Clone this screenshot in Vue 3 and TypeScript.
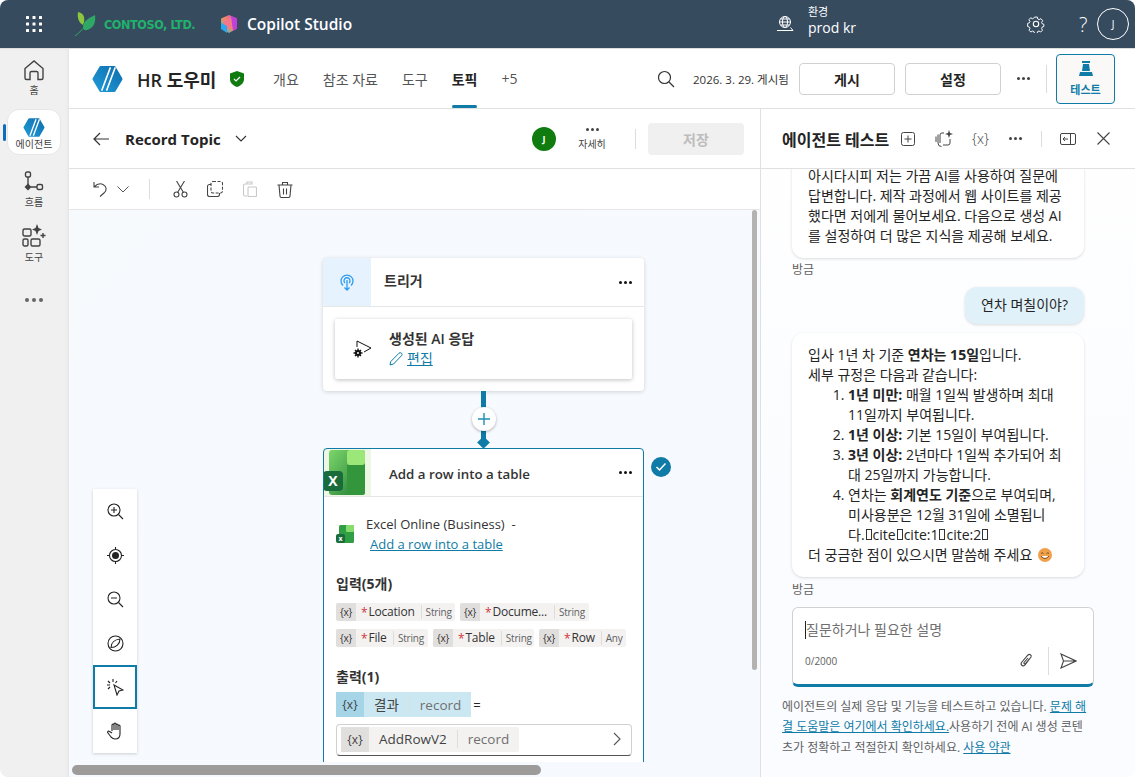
<script setup lang="ts">
interface Chip {
  name: string
  type: string
  width: number
}

const tabs = ['개요', '참조 자료', '도구', '토픽', '+5']

const inputRows: Chip[][] = [
  [
    { name: 'Location', type: 'String', width: 119 },
    { name: 'Docume...', type: 'String', width: 129 }
  ],
  [
    { name: 'File', type: 'String', width: 92 },
    { name: 'Table', type: 'String', width: 101 },
    { name: 'Row', type: 'Any', width: 87 }
  ]
]
</script>

<template>
  <div class="app">
    <header class="topbar">
      <svg class="waffle" width="16" height="16" viewBox="0 0 16 16" fill="#fff">
        <rect v-for="n in 9" :key="n" :x="(n - 1) % 3 * 6.5" :y="Math.floor((n - 1) / 3) * 6.5" width="3" height="3" rx=".5" />
      </svg>
      <svg class="leaf" width="22" height="26" viewBox="0 0 22 26">
        <path d="M3 1c5 1 7 4 6 10l-1 3C4 12 2 7 3 1z" fill="#8cc63f" />
        <path d="M20 4c1 7-1 13-8 15-3 1-4-1-4-3 0-6 6-9 12-12z" fill="#2fa866" />
        <path d="M0 25C5 21 9 17 14 11" stroke="#2fa866" stroke-width="1" fill="none" />
      </svg>
      <span class="contoso">CONTOSO, LTD.</span>
      <svg class="copilot" width="18" height="18" viewBox="0 0 18 18">
        <defs>
          <linearGradient id="cp" x1="0" y1="1" x2="1" y2="0">
            <stop offset="0" stop-color="#20c4e8" />
            <stop offset=".5" stop-color="#f58a5a" />
            <stop offset="1" stop-color="#c84fe0" />
          </linearGradient>
        </defs>
        <path d="M9 0l8 3.500v10L9 18l-8-4.500v-10z" fill="url(#cp)" />
        <path d="M11 1l6 2.500v10l-4 2.500z" fill="#c03fd8" />
        <path d="M4 5l7-2 1 9-5 3-3-2z" fill="#f4788a" />
        <path d="M1 8l6 3v7l-6-4z" fill="#2aa8f0" />
      </svg>
      <span class="product">Copilot Studio</span>
      <svg class="globe" width="18" height="16" viewBox="0 0 18 16" fill="none" stroke="#fff" stroke-width="1">
        <circle cx="9" cy="6" r="5.500" />
        <ellipse cx="9" cy="6" rx="2.500" ry="5.500" />
        <path d="M3.500 6h11M4.500 3h9M4.500 9h9M1 14.500h16l-2.500-3" />
      </svg>
      <div class="env">
        <span class="env-label">환경</span>
        <span class="env-name">prod kr</span>
      </div>
      <svg class="gear" width="18" height="18" viewBox="0 0 18 18" fill="none" stroke="#fff" stroke-width="1.100">
        <circle cx="9" cy="9" r="2.700" />
        <path d="M7.500 1.200h3l.5 2.200 1.500.7 2-1.100 2 2.200-1.200 1.900.5 1.500 2 .7v2.500l-2 .7-.5 1.500 1 2-2 2-2-1.100-1.500.6-.6 2.200h-2.900l-.6-2.200-1.500-.6-2 1.100-2-2 1-2-.6-1.500-2-.7V8.300l2-.7.6-1.500-1.200-1.900 2-2.200 2 1.100 1.500-.7z" transform="translate(1 1) scale(.89)" />
      </svg>
      <span class="help">?</span>
      <span class="me">J</span>
    </header>

    <div class="main">
      <nav class="rail">
        <div class="rail-item home">
          <svg width="22" height="22" viewBox="0 0 22 22" fill="none" stroke="#424242" stroke-width="1.400">
            <path d="M2 9.500L11 2l9 7.500V19a1.500 1.500 0 0 1-1.500 1.500H15V14a1.500 1.500 0 0 0-1.500-1.500h-5A1.500 1.500 0 0 0 7 14v6.500H3.500A1.500 1.500 0 0 1 2 19z" />
          </svg>
          <span>홈</span>
        </div>
        <div class="rail-active">
          <i class="rail-mark"></i>
          <svg width="22" height="19" viewBox="0 0 32 28">
            <defs>
              <linearGradient id="hexa" x1="0" y1="1" x2="1" y2="0">
                <stop offset="0" stop-color="#1e9ad6" />
                <stop offset="1" stop-color="#0f6fb0" />
              </linearGradient>
            </defs>
            <path d="M9 2h14l7 12-7 12H9L2 14z" fill="url(#hexa)" stroke="url(#hexa)" stroke-width="3" stroke-linejoin="round" />
            <path d="M19 2L10 26M24 2l-9 24" stroke="#fff" stroke-width="2" />
          </svg>
          <span>에이전트</span>
        </div>
        <div class="rail-item flow">
          <svg width="20" height="24" viewBox="0 0 20 24" fill="none" stroke="#424242" stroke-width="1.400">
            <rect x="1.500" y="1" width="5" height="5" rx="1.500" />
            <path d="M4 6v12" />
            <path d="M4 12.500L7.500 16 4 19.500.500 16z" fill="#424242" stroke="none" />
            <path d="M7 16h6" />
            <rect x="13" y="13.500" width="5.500" height="5" rx="1.500" />
          </svg>
          <span>흐름</span>
        </div>
        <div class="rail-item tools">
          <svg width="24" height="24" viewBox="0 0 24 24" fill="none" stroke="#424242" stroke-width="1.400">
            <rect x="1" y="5" width="8" height="7" rx="1.500" />
            <rect x="1" y="15" width="5" height="7" rx="1.500" />
            <rect x="9" y="15" width="9" height="7" rx="1.500" />
            <path d="M15 0l1.500 4L20 5.500 16.500 7 15 11l-1.500-4L10 5.500 13.500 4z" fill="#424242" stroke="none" />
            <path d="M21 9v5M18.500 11.500h5" />
          </svg>
          <span>도구</span>
        </div>
        <div class="rail-more"><i></i><i></i><i></i></div>
      </nav>

      <div class="content">
        <div class="agent-bar">
          <svg class="agent-logo" width="31" height="28" viewBox="0 0 32 28">
            <path d="M9 2h14l7 12-7 12H9L2 14z" fill="url(#hexa)" stroke="url(#hexa)" stroke-width="3" stroke-linejoin="round" />
            <path d="M19 2L10 26M24 2l-9 24" stroke="#fff" stroke-width="1.600" />
          </svg>
          <span class="agent-name">HR 도우미</span>
          <svg class="shield" width="14" height="16" viewBox="0 0 14 16">
            <path d="M7 0l7 2.500V8c0 4-3 6.500-7 8-4-1.500-7-4-7-8V2.500z" fill="#107c10" />
            <path d="M4 8l2 2 4-4" fill="none" stroke="#fff" stroke-width="1.200" />
          </svg>
          <div class="tabs">
            <span v-for="tab in tabs" :key="tab" class="tab" :class="{ on: tab === '토픽' }">{{ tab }}</span>
          </div>
          <svg class="search" width="18" height="18" viewBox="0 0 18 18" fill="none" stroke="#333" stroke-width="1.200">
            <circle cx="7.500" cy="7.500" r="6" />
            <path d="M12 12l5 5" />
          </svg>
          <span class="published">2026. 3. 29. 게시됨</span>
          <button class="btn">게시</button>
          <button class="btn second">설정</button>
          <span class="dots agent-dots"><i></i><i></i><i></i></span>
          <i class="vline"></i>
          <button class="test-btn">
            <svg width="14" height="16" viewBox="0 0 14 16" fill="#0f7ba6">
              <path d="M3 0h8v2H3zM4 3h6l1 7H3zM1 11h12l1 4H0z" />
            </svg>
            <span>테스트</span>
          </button>
        </div>

        <div class="work">
          <section class="editor">
            <div class="topic-bar">
              <svg width="16" height="14" viewBox="0 0 16 14" fill="none" stroke="#333" stroke-width="1.200">
                <path d="M16 7H1M7 1L1 7l6 6" />
              </svg>
              <span class="topic-name">Record Topic</span>
              <svg width="12" height="8" viewBox="0 0 12 8" fill="none" stroke="#333" stroke-width="1.100">
                <path d="M1 1l5 5 5-5" />
              </svg>
              <span class="owner">J</span>
              <div class="more">
                <span class="dots"><i></i><i></i><i></i></span>
                <span>자세히</span>
              </div>
              <i class="vline short"></i>
              <button class="save">저장</button>
            </div>

            <div class="toolbar">
              <svg class="t-undo" width="15" height="16" viewBox="0 0 15 16" fill="none" stroke="#444" stroke-width="1.100">
                <path d="M1 1v5h5M1 6c3-3 6-4 9-2.500 4 2 4 6 1 8.500l-4 3.500" />
              </svg>
              <svg class="t-chev" width="12" height="7" viewBox="0 0 12 7" fill="none" stroke="#555">
                <path d="M.500.500L6 6l5.500-5.500" />
              </svg>
              <i class="vline tool-line"></i>
              <svg class="t-cut" width="15" height="17" viewBox="0 0 15 17" fill="none" stroke="#444" stroke-width="1.100">
                <circle cx="3.500" cy="13.500" r="2.500" />
                <circle cx="11.500" cy="13.500" r="2.500" />
                <path d="M4.500 11.500L11.500 0M10.500 11.500L3.500 0" />
              </svg>
              <svg class="t-copy" width="16" height="16" viewBox="0 0 16 16" fill="none" stroke="#444" stroke-width="1.100">
                <rect x="4" y=".5" width="11.500" height="11.500" rx="2" stroke-dasharray="3 1.500" />
                <path d="M4 3.500H2.500a2 2 0 0 0-2 2v8a2 2 0 0 0 2 2h8a2 2 0 0 0 2-2V12" />
              </svg>
              <svg class="t-paste" width="14" height="16" viewBox="0 0 14 16" fill="none" stroke="#c8c8c8" stroke-width="1.100">
                <path d="M4 3H2a1.500 1.500 0 0 0-1.500 1.500v9A1.500 1.500 0 0 0 2 15h2M4 1h5v2H4z" />
                <rect x="5" y="6" width="8.500" height="9.500" rx="1" />
              </svg>
              <svg class="t-trash" width="16" height="17" viewBox="0 0 16 17" fill="none" stroke="#444" stroke-width="1.100">
                <path d="M.500 4h15M5.500 4V1.500h5V4M2 4l1 11a1.500 1.500 0 0 0 1.500 1.500h7A1.500 1.500 0 0 0 13 15l1-11M6.500 7.500v6M9.500 7.500v6" />
              </svg>
            </div>

            <div class="canvas">
              <div class="flow-col">
                <article class="node">
                  <div class="node-head">
                    <div class="node-icon trigger">
                      <svg width="14" height="17" viewBox="0 0 14 17" fill="none" stroke="#2f9bf0" stroke-width="1.300">
                        <path d="M3 11.500a6 6 0 1 1 8 0" />
                        <path d="M5 9a3 3 0 1 1 4 0" />
                        <path d="M7 6v10M4.500 13.500L7 16l2.500-2.500" />
                      </svg>
                    </div>
                    <span class="node-title">트리거</span>
                    <span class="dots black"><i></i><i></i><i></i></span>
                  </div>
                  <div class="trigger-body">
                    <div class="ai-card">
                      <svg class="ai-icon" width="20" height="20" viewBox="0 0 20 20">
                        <path d="M4 8V2l14 7-7 4" fill="none" stroke="#111" stroke-width="1" />
                        <circle cx="5" cy="14" r="3" fill="#111" />
                        <path d="M5 9.500v9M.5 14h9M2 11l6 6M8 11l-6 6" stroke="#111" stroke-width="1.400" />
                        <circle cx="5" cy="14" r="1" fill="#fff" />
                      </svg>
                      <div class="ai-text">
                        <span class="ai-title">생성된 AI 응답</span>
                        <span class="ai-edit">
                          <svg width="14" height="14" viewBox="0 0 14 14" fill="none" stroke="#0f7ba6">
                            <path d="M1 13l.8-3.500L10 1.200a1.500 1.500 0 0 1 2.500 2.500L4.500 12z" />
                          </svg>
                          <a>편집</a>
                        </span>
                      </div>
                    </div>
                  </div>
                </article>

                <div class="link">
                  <span class="plus">
                    <svg width="14" height="14" viewBox="0 0 14 14" stroke="#1d8fb5" stroke-width="1.400">
                      <path d="M7 1v12M1 7h12" />
                    </svg>
                  </span>
                  <i class="diamond"></i>
                </div>

                <article class="node action">
                  <div class="node-head">
                    <div class="node-icon excel">
                      <svg width="46" height="48" viewBox="0 0 46 48">
                        <defs>
                          <linearGradient id="xl" x1="0" y1="0" x2="1" y2="1">
                            <stop offset="0" stop-color="#7cd66a" />
                            <stop offset="1" stop-color="#1e7a34" />
                          </linearGradient>
                        </defs>
                        <rect x="6" y="2" width="36" height="45" rx="3" fill="url(#xl)" />
                        <rect x="24" y="2" width="18" height="15" rx="3" fill="#9be878" />
                        <path d="M24 17h18v27a3 3 0 0 1-3 3H24z" fill="#33953c" />
                        <rect x="0" y="23" width="20" height="20" rx="4" fill="#1a6b3b" />
                        <text x="10" y="38" class="xl-x">X</text>
                      </svg>
                    </div>
                    <span class="node-title plain">Add a row into a table</span>
                    <span class="dots black"><i></i><i></i><i></i></span>
                  </div>
                  <i class="done">
                    <svg width="12" height="10" viewBox="0 0 12 10" fill="none" stroke="#fff" stroke-width="1.500">
                      <path d="M1.500 5l3 3 6-6.500" />
                    </svg>
                  </i>
                  <div class="action-body">
                    <div class="connector">
                      <svg width="19" height="20" viewBox="0 0 19 20">
                        <rect x="3" y="1" width="15" height="18" rx="1.500" fill="#2f9e44" />
                        <rect x="10" y="1" width="8" height="7" rx="1" fill="#86dc6c" />
                        <rect x="0" y="10" width="9" height="9" rx="2" fill="#1a6b3b" />
                        <text x="4.500" y="17" class="xl-small">x</text>
                      </svg>
                      <div class="connector-text">
                        <span>Excel Online (Business) &nbsp;-</span>
                        <a>Add a row into a table</a>
                      </div>
                    </div>

                    <h4>입력(5개)</h4>
                    <div v-for="(row, i) in inputRows" :key="i" class="chip-row">
                      <span v-for="chip in row" :key="chip.name" class="chip" :style="{ width: chip.width + 'px' }">
                        <span class="chip-x">{x}</span>
                        <b>*</b>
                        <span class="chip-name">{{ chip.name }}</span>
                        <span class="chip-type">{{ chip.type }}</span>
                      </span>
                    </div>

                    <h4 class="out-title">출력(1)</h4>
                    <div class="out-row">
                      <span class="var blue">
                        <span class="var-x">{x}</span>
                        <span class="var-name">결과</span>
                        <span class="var-type">record</span>
                      </span>
                      <span class="eq">=</span>
                    </div>
                    <div class="value-box">
                      <span class="var">
                        <span class="var-x">{x}</span>
                        <span class="var-name">AddRowV2</span>
                        <span class="var-type">record</span>
                      </span>
                      <svg width="8" height="14" viewBox="0 0 8 14" fill="none" stroke="#555" stroke-width="1.100">
                        <path d="M1 1l6 6-6 6" />
                      </svg>
                    </div>
                  </div>
                </article>
              </div>

              <div class="zoom-bar">
                <span class="zoom-btn">
                  <svg width="17" height="17" viewBox="0 0 17 17" fill="none" stroke="#222" stroke-width="1.100">
                    <circle cx="7" cy="7" r="6" />
                    <path d="M11.500 11.500L16 16M4 7h6M7 4v6" />
                  </svg>
                </span>
                <span class="zoom-btn">
                  <svg width="17" height="17" viewBox="0 0 17 17" fill="none" stroke="#222" stroke-width="1.100">
                    <circle cx="8.500" cy="8.500" r="6" />
                    <circle cx="8.500" cy="8.500" r="3.500" fill="#222" stroke="none" />
                    <path d="M8.500 0v2.500M8.500 14.500V17M0 8.500h2.500M14.500 8.500H17" />
                  </svg>
                </span>
                <span class="zoom-btn">
                  <svg width="17" height="17" viewBox="0 0 17 17" fill="none" stroke="#222" stroke-width="1.100">
                    <circle cx="7" cy="7" r="6" />
                    <path d="M11.500 11.500L16 16M4 7h6" />
                  </svg>
                </span>
                <span class="zoom-btn">
                  <svg width="17" height="17" viewBox="0 0 17 17" fill="none" stroke="#222" stroke-width="1.100">
                    <circle cx="8.500" cy="8.500" r="7.500" />
                    <path d="M4 12.500c0-5 4-8 9-8.500 0 5-4 8.500-9 8.500z" />
                  </svg>
                </span>
                <span class="zoom-btn picked">
                  <svg width="17" height="17" viewBox="0 0 17 17" fill="none" stroke="#222" stroke-width="1.100">
                    <path d="M7 6l9 5-4 1-2 4z" />
                    <path d="M6 0v3M1 2l2 2M0 6h3M1 10l2-2M10 2L8.500 4" />
                  </svg>
                </span>
                <span class="zoom-btn">
                  <svg width="17" height="18" viewBox="0 0 17 18" fill="none" stroke="#222" stroke-width="1.100">
                    <path d="M5 9V3a1 1 0 0 1 2 0V2a1 1 0 0 1 2 0v1a1 1 0 0 1 2 0v1a1 1 0 0 1 2 0v8c0 3-2 5-5 5-2 0-3-1-4-2L1 11c-1-1 0-2.500 1.500-1.500L5 11M7 3v5M9 3v5M11 4v4" />
                  </svg>
                </span>
              </div>

              <i class="vbar"></i>
              <div class="htrack"><i class="hbar"></i></div>
            </div>
          </section>

          <aside class="panel">
            <div class="panel-head">
              <span class="panel-title">에이전트 테스트</span>
              <svg class="p-new" width="14" height="14" viewBox="0 0 14 14" fill="none" stroke="#444">
                <rect x=".5" y=".5" width="13" height="13" rx="2" />
                <path d="M7 3.500v7M3.500 7h7" />
              </svg>
              <svg class="p-spark" width="18" height="17" viewBox="0 0 18 17" fill="none" stroke="#444">
                <path d="M9 3H7a2 2 0 0 0-2 2v8M3 4.500v8.500a3.500 3.500 0 0 0 3.500 3.500M1 6.500V12M8 15h5a2 2 0 0 0 2-2V9" />
                <path d="M14 0l1 3 3 1-3 1-1 3-1-3-3-1 3-1z" fill="#444" stroke="none" />
              </svg>
              <span class="p-x">{x}</span>
              <span class="dots p-dots"><i></i><i></i><i></i></span>
              <i class="vline p-line"></i>
              <svg class="p-side" width="16" height="12" viewBox="0 0 16 12" fill="none" stroke="#444">
                <rect x=".5" y=".5" width="15" height="11" rx="1.500" />
                <path d="M10.500.5v11M8 6H3M5 4L3 6l2 2" />
              </svg>
              <svg class="p-close" width="13" height="13" viewBox="0 0 13 13" stroke="#444" stroke-width="1.100">
                <path d="M.5.5l12 12M12.500.5l-12 12" />
              </svg>
            </div>

            <div class="chat">
              <div class="bubble">
                아시다시피 저는 가끔 AI를 사용하여 질문에 답변합니다. 제작 과정에서 웹 사이트를 제공했다면 저에게 물어보세요. 다음으로 생성 AI를 설정하여 더 많은 지식을 제공해 보세요.
              </div>
              <span class="stamp">방금</span>
              <div class="bubble user">연차 며칠이야?</div>
              <div class="bubble answer">
                입사 1년 차 기준 <strong>연차는 15일</strong>입니다.<br />
                세부 규정은 다음과 같습니다:
                <ol>
                  <li><strong>1년 미만:</strong> 매월 1일씩 발생하며 최대<br />11일까지 부여됩니다.</li>
                  <li><strong>1년 이상:</strong> 기본 15일이 부여됩니다.</li>
                  <li><strong>3년 이상:</strong> 2년마다 1일씩 추가되어 최<br />대 25일까지 가능합니다.</li>
                  <li>연차는 <strong>회계연도 기준</strong>으로 부여되며,<br />미사용분은 12월 31일에 소멸됩니<br />다.<i class="tofu"></i>cite<i class="tofu"></i>cite:1<i class="tofu"></i>cite:2<i class="tofu"></i></li>
                </ol>
                더 궁금한 점이 있으시면 말씀해 주세요
                <svg class="smile" width="14" height="14" viewBox="0 0 14 14">
                  <circle cx="7" cy="7" r="7" fill="#f0a04b" />
                  <path d="M3 5.500q1-1.500 2.500 0M8.500 5.500q1.500-1.500 2.500 0" stroke="#7a4a1e" fill="none" />
                  <path d="M3 8q4 5 8 0" stroke="#7a4a1e" fill="#fff" />
                </svg>
              </div>
              <span class="stamp last">방금</span>
            </div>

            <div class="composer">
              <div class="prompt"><i class="caret"></i>질문하거나 필요한 설명</div>
              <div class="composer-foot">
                <span class="count">0/2000</span>
                <svg class="clip" width="14" height="15" viewBox="0 0 14 15" fill="none" stroke="#444" stroke-width="1.100">
                  <path d="M12 4L6 12c-1.500 2-5 0-3.500-2.500L9 2c1.500-1.500 4 0 3 2L6.500 10.500c-.8 1-2 0-1.500-1L9 5" />
                </svg>
                <i class="vline c-line"></i>
                <svg width="17" height="16" viewBox="0 0 17 16" fill="none" stroke="#444" stroke-width="1.100">
                  <path d="M1 1l15 7-15 7 2.500-7zM3.500 8H16" />
                </svg>
              </div>
            </div>
            <p class="legal">
              에이전트의 실제 응답 및 기능을 테스트하고 있습니다. <a>문제 해<br />결 도움말은 여기에서 확인하세요.</a>사용하기 전에 AI 생성 콘텐<br />츠가 정확하고 적절한지 확인하세요. <a>사용 약관</a>
            </p>
          </aside>
        </div>
      </div>
    </div>
  </div>
</template>

<style>
html,
body {
  margin: 0;
  background: #fff;
}
</style>

<style scoped>
.app {
  width: 1135px;
  height: 777px;
  display: flex;
  flex-direction: column;
  overflow: hidden;
  border-radius: 8px;
  font-family: "Open Sans", "Noto Sans CJK KR", sans-serif;
  font-size: 14px;
  color: #242424;
}

i {
  font-style: normal;
  display: block;
}

/* top bar */
.topbar {
  height: 49px;
  flex: none;
  background: #374b5f;
  color: #fff;
  display: flex;
  align-items: center;
  border-bottom: 1px solid #dedede;
  box-sizing: border-box;
}
.waffle {
  margin-left: 26px;
}
.leaf {
  margin-left: 33px;
}
.contoso {
  margin-left: 7px;
  font-family: "DejaVu Sans", sans-serif;
  font-stretch: condensed;
  font-weight: 700;
  font-size: 12.500px;
  letter-spacing: -.4px;
  color: #1fb26c;
  width: 116px;
  white-space: nowrap;
}
.product {
  margin-left: 9px;
  font-size: 15.500px;
  font-weight: 600;
  width: 529px;
  white-space: nowrap;
}
.env {
  margin-left: 14px;
  display: flex;
  flex-direction: column;
  width: 219px;
  line-height: 16px;
  padding-bottom: 8px;
}
.env-label {
  font-size: 11px;
}
.env-name {
  font-size: 14px;
}
.help {
  margin-left: 34px;
  font-size: 20px;
  font-weight: 300;
  width: 13px;
}
.me {
  margin-left: 5px;
  width: 32px;
  height: 32px;
  box-sizing: border-box;
  border: 1px solid #fff;
  border-radius: 50%;
  display: flex;
  align-items: center;
  justify-content: center;
  font-size: 10px;
}

.main {
  flex: 1;
  min-height: 0;
  display: flex;
}

/* left rail */
.rail {
  width: 69px;
  flex: none;
  background: #f0f0f0;
  box-shadow: inset -3px 0 3px -2px #e2e2e2;
  display: flex;
  flex-direction: column;
  align-items: center;
  padding: 10px 1px 0 0;
  box-sizing: border-box;
}
.rail-item,
.rail-active {
  display: flex;
  flex-direction: column;
  align-items: center;
  font-size: 10px;
  color: #424242;
  line-height: 14px;
}
.rail-item span {
  margin-top: 2px;
}
.rail-active {
  position: relative;
  width: 54px;
  height: 46px;
  box-sizing: border-box;
  margin-top: 12px;
  padding-top: 8px;
  background: #fff;
  border: 1px solid #e6e6e6;
  border-radius: 12px;
}
.rail-mark {
  position: absolute;
  left: -5px;
  top: 14px;
  width: 3px;
  height: 17px;
  border-radius: 2px;
  background: #0f6cbd;
}
.flow {
  margin-top: 16px;
}
.flow span {
  margin-top: 0;
}
.tools {
  margin-top: 15px;
}
.rail-more {
  margin-top: 34px;
  display: flex;
  gap: 3px;
}
.rail-more i {
  width: 4px;
  height: 4px;
  border-radius: 50%;
  background: #666;
}

.content {
  flex: 1;
  min-width: 0;
  display: flex;
  flex-direction: column;
}

/* agent header */
.agent-bar {
  height: 60px;
  flex: none;
  display: flex;
  align-items: center;
  border-bottom: 1px solid #e0e0e0;
  box-sizing: border-box;
  position: relative;
}
.agent-logo {
  margin-left: 23px;
}
.agent-name {
  margin-left: 14px;
  font-size: 18px;
  font-weight: 600;
  width: 93px;
  white-space: nowrap;
}
.tabs {
  margin-left: 29px;
  display: flex;
  gap: 24px;
  height: 100%;
  width: 384px;
}
.tab {
  display: flex;
  align-items: center;
  color: #555;
  font-size: 14px;
  position: relative;
}
.tab.on {
  color: #242424;
  font-weight: 700;
}
.tab.on::after {
  content: "";
  position: absolute;
  left: 0;
  right: 0;
  bottom: 0;
  height: 3px;
  border-radius: 2px;
  background: #0f7ba6;
}
.published {
  margin-left: 18px;
  font-size: 11.500px;
  width: 106px;
  white-space: nowrap;
  color: #333;
}
.btn {
  width: 96px;
  height: 32px;
  background: #fff;
  border: 1px solid #d1d1d1;
  border-radius: 4px;
  font: inherit;
  font-weight: 700;
  color: #242424;
  padding: 0;
}
.second {
  margin-left: 10px;
}
.dots {
  display: inline-flex;
  gap: 2px;
}
.dots i {
  width: 3px;
  height: 3px;
  border-radius: 50%;
  background: #424242;
}
.dots.black i {
  background: #111;
}
.agent-dots {
  margin-left: 16px;
}
.vline {
  width: 1px;
  background: #dcdcdc;
  height: 28px;
}
.agent-bar .vline {
  margin-left: 16px;
}
.test-btn {
  margin-left: 9px;
  width: 59px;
  height: 50px;
  background: #faf9f8;
  border: 1px solid #0f7ba6;
  border-radius: 4px;
  display: flex;
  flex-direction: column;
  align-items: center;
  justify-content: center;
  gap: 4px;
  padding: 0;
  font-family: inherit;
  font-size: 11px;
  font-weight: 700;
  color: #0f7ba6;
}

.work {
  flex: 1;
  min-height: 0;
  display: flex;
}

/* editor */
.editor {
  width: 692px;
  flex: none;
  border-right: 1px solid #e0e0e0;
  box-sizing: border-box;
  display: flex;
  flex-direction: column;
  min-height: 0;
}
.topic-bar {
  height: 60px;
  flex: none;
  display: flex;
  align-items: center;
  padding-left: 24px;
  border-bottom: 1px solid #e0e0e0;
  box-sizing: border-box;
}
.topic-name {
  margin-left: 16px;
  font-size: 15px;
  font-weight: 700;
  width: 110px;
  white-space: nowrap;
}
.owner {
  margin-left: 285px;
  width: 24px;
  height: 24px;
  border-radius: 50%;
  background: #107c10;
  color: #fff;
  display: flex;
  align-items: center;
  justify-content: center;
  font-size: 9px;
  font-weight: 700;
}
.more {
  margin-left: 21px;
  width: 30px;
  display: flex;
  flex-direction: column;
  align-items: center;
  gap: 7px;
  font-size: 10px;
  color: #424242;
  line-height: 12px;
}
.vline.short {
  height: 20px;
  margin-left: 28px;
}
.save {
  margin-left: 12px;
  width: 96px;
  height: 32px;
  border: none;
  border-radius: 4px;
  background: #f0f0f0;
  color: #bdbdbd;
  font-family: inherit;
  font-size: 14px;
  font-weight: 700;
  padding: 0;
}

.toolbar {
  height: 41px;
  flex: none;
  display: flex;
  align-items: center;
  padding-left: 24px;
  border-bottom: 1px solid #e6e6e6;
  box-sizing: border-box;
}
.t-chev {
  margin-left: 9px;
}
.tool-line {
  margin-left: 20px;
  height: 20px;
}
.t-cut {
  margin-left: 23px;
}
.t-copy {
  margin-left: 19px;
}
.t-paste {
  margin-left: 20px;
}
.t-trash {
  margin-left: 20px;
}

/* canvas */
.canvas {
  flex: 1;
  min-height: 0;
  position: relative;
  overflow: hidden;
  background: linear-gradient(135deg, #f7fafd, #f6f9fe);
}
.flow-col {
  width: 321px;
  margin-left: 254px;
  padding-top: 48px;
}
.node {
  background: #fff;
  border-radius: 4px;
  box-shadow: 0 1px 4px rgba(0, 0, 0, .16);
  position: relative;
}
.node-head {
  height: 48px;
  display: flex;
  align-items: center;
  border-bottom: 1px solid #e6e6e6;
  padding-right: 12px;
}
.node-icon {
  width: 48px;
  height: 48px;
  flex: none;
  display: flex;
  align-items: center;
  justify-content: center;
}
.trigger {
  background: #e6f2fd;
}
.node-title {
  margin: 0 0 4px 13px;
  flex: 1;
  font-weight: 700;
  color: #333;
  font-size: 14px;
}
.node-title.plain {
  margin: 4px 0 0 18px;
  font-size: 13.300px;
  font-weight: 600;
}
.trigger-body {
  padding: 12px;
}
.ai-card {
  height: 60px;
  display: flex;
  align-items: center;
  padding-left: 18px;
  box-shadow: 0 1px 4px rgba(0, 0, 0, .25);
  border-radius: 2px;
}
.ai-text {
  margin-left: 16px;
  display: flex;
  flex-direction: column;
  line-height: 20px;
}
.ai-title {
  font-weight: 600;
  font-size: 14px;
  color: #333;
}
.ai-edit {
  display: flex;
  align-items: center;
  gap: 4px;
  font-size: 14px;
}
a {
  color: #0f7ba6;
  text-decoration: underline;
}
.link {
  height: 57px;
  position: relative;
}
.link::before {
  content: "";
  position: absolute;
  left: 158px;
  top: 0;
  width: 5px;
  height: 52px;
  background: #0f7ba6;
}
.plus {
  position: absolute;
  left: 149px;
  top: 16px;
  width: 24px;
  height: 24px;
  border-radius: 50%;
  background: #fff;
  box-shadow: 0 1px 3px rgba(0, 0, 0, .3);
  display: flex;
  align-items: center;
  justify-content: center;
}
.diamond {
  position: absolute;
  left: 156px;
  top: 47px;
  width: 9px;
  height: 9px;
  background: #0f7ba6;
  transform: rotate(45deg);
}
.action {
  box-shadow: none;
  outline: 1px solid #0f7ba6;
  outline-offset: -1px;
  height: 400px;
}
.excel {
  background: #eef7e6;
  justify-content: flex-start;
}
.done {
  position: absolute;
  left: 328px;
  top: 9px;
  width: 20px;
  height: 20px;
  border-radius: 50%;
  background: #0f7ba6;
  display: flex;
  align-items: center;
  justify-content: center;
}
.xl-x {
  fill: #fff;
  font-size: 14px;
  font-weight: 700;
  text-anchor: middle;
}
.xl-small {
  fill: #fff;
  font-size: 7px;
  font-weight: 700;
  text-anchor: middle;
}
.action-body {
  padding: 17px 12px 0 13px;
}
.connector {
  display: flex;
  align-items: center;
  gap: 11px;
}
.connector-text {
  display: flex;
  flex-direction: column;
  font-size: 13px;
  color: #333;
  line-height: 20px;
}
.connector-text a {
  margin-left: 4px;
}
h4 {
  margin: 20px 0 9px;
  font-size: 14px;
  font-weight: 700;
  color: #333;
  line-height: 20px;
}
.chip-row {
  display: flex;
  gap: 5px;
  margin-bottom: 8px;
}
.chip {
  height: 18px;
  box-sizing: border-box;
  display: flex;
  align-items: center;
  background: #f3f2f1;
  border-radius: 2px;
  font-size: 12px;
  color: #333;
  white-space: nowrap;
  overflow: hidden;
  letter-spacing: -.2px;
}
.chip-x {
  width: 20px;
  height: 100%;
  flex: none;
  background: #e1dfdd;
  display: flex;
  align-items: center;
  justify-content: center;
  font-size: 10px;
}
.chip b {
  margin-left: 5px;
  color: #d13438;
  font-weight: 400;
}
.chip-name {
  margin-left: 1px;
  padding-right: 6px;
  border-right: 1px solid #dcdcdc;
  flex: 1;
  line-height: 14px;
}
.chip-type {
  padding: 0 4px;
  font-size: 10px;
  color: #616161;
}
.out-title {
  margin: 20px 0 5px;
}
.out-row {
  display: flex;
  align-items: center;
}
.var {
  height: 25px;
  display: inline-flex;
  align-items: center;
  background: #f3f2f1;
  border-radius: 2px;
  font-size: 13.500px;
  color: #424242;
}
.var.blue {
  background: #cbe7f2;
  border-radius: 0;
}
.var-x {
  width: 28px;
  height: 100%;
  background: #e1dfdd;
  display: flex;
  align-items: center;
  justify-content: center;
  font-size: 12px;
}
.blue .var-x {
  background: #a6d5e8;
}
.var-name {
  padding: 0 10px;
  border-right: 1px solid #dedede;
  line-height: 18px;
}
.var-type {
  padding: 0 10px;
  color: #707070;
}
.eq {
  margin-left: 2px;
  font-size: 13px;
}
.value-box {
  margin-top: 7px;
  height: 32px;
  box-sizing: border-box;
  width: 296px;
  display: flex;
  align-items: center;
  justify-content: space-between;
  border: 1px solid #d1d1d1;
  border-bottom: 1px solid #555;
  border-radius: 4px;
  padding: 0 10px 2px 4px;
}

.zoom-bar {
  position: absolute;
  left: 24px;
  top: 279px;
  width: 44px;
  background: #fff;
  box-shadow: 0 1px 3px rgba(0, 0, 0, .18);
  display: flex;
  flex-direction: column;
}
.zoom-btn {
  height: 44px;
  box-sizing: border-box;
  display: flex;
  align-items: center;
  justify-content: center;
}
.picked {
  border: 2px solid #0f7ba6;
}
.vbar {
  position: absolute;
  left: 683px;
  top: 0;
  width: 5px;
  height: 460px;
  border-radius: 3px;
  background: #b5b3b1;
}
.htrack {
  position: absolute;
  left: 0;
  right: 0;
  bottom: 0;
  height: 15px;
  background: #f6f9fd;
}
.hbar {
  margin: 3px 0 0 3px;
  width: 469px;
  height: 10px;
  border-radius: 5px;
  background: #9e9c9a;
}

/* test panel */
.panel {
  flex: 1;
  min-width: 0;
  display: flex;
  flex-direction: column;
  background: linear-gradient(180deg, #fff 0, #fbfcff 60%);
}
.panel-head {
  height: 60px;
  flex: none;
  display: flex;
  align-items: center;
  padding-left: 21px;
  border-bottom: 1px solid #e0e0e0;
  box-sizing: border-box;
}
.panel-title {
  font-size: 16px;
  font-weight: 700;
  width: 119px;
  white-space: nowrap;
}
.p-spark {
  margin-left: 20px;
}
.p-x {
  margin-left: 19px;
  font-size: 14px;
  font-weight: 300;
  color: #444;
  width: 17px;
  white-space: nowrap;
}
.p-dots {
  margin-left: 20px;
}
.p-line {
  margin-left: 19px;
  height: 16px;
}
.p-side {
  margin-left: 18px;
}
.p-close {
  margin-left: 21px;
}
.chat {
  flex: 1;
  min-height: 0;
  overflow: hidden;
  display: flex;
  flex-direction: column;
  justify-content: flex-end;
  padding: 0 51px 0 31px;
}
.bubble {
  flex: none;
  background: #fff;
  border-radius: 12px;
  box-shadow: 0 1px 3px rgba(0, 0, 0, .14);
  padding: 8px 16px 12px;
  font-size: 14px;
  line-height: 20px;
  word-break: break-all;
  color: #242424;
}
.bubble.user {
  align-self: flex-end;
  background: #e0f1fa;
  margin-top: 8px;
  padding: 8px 16px 9px;
}
.answer {
  margin-top: 9px;
  padding: 12px 16px 12px;
}
.answer ol {
  margin: 0;
  padding-left: 40px;
}
.tofu {
  display: inline-block;
  width: 6px;
  height: 11px;
  border: 1px solid #333;
  margin: 0 1px;
  box-sizing: border-box;
}
.smile {
  vertical-align: -2px;
  margin-left: 2px;
}
.stamp {
  flex: none;
  margin-top: 3px;
  font-size: 12px;
  line-height: 18px;
  color: #616161;
}
.stamp.last {
  margin-top: 4px;
}
.composer {
  flex: none;
  margin: 8px 41px 0 31px;
  height: 80px;
  box-sizing: border-box;
  background: #fff;
  border: 1px solid #d1d1d1;
  border-bottom: 3px solid #0f7ba6;
  border-radius: 6px;
  padding: 12px 12px 0;
}
.prompt {
  display: flex;
  align-items: center;
  color: #707070;
  font-size: 14px;
  line-height: 20px;
}
.caret {
  width: 1px;
  height: 18px;
  background: #222;
}
.composer-foot {
  margin-top: 7px;
  display: flex;
  align-items: center;
  height: 28px;
  padding-right: 4px;
}
.count {
  flex: 1;
  font-size: 10px;
  color: #616161;
}
.c-line {
  margin: 0 11px 0 15px;
  height: 28px;
}
.legal {
  flex: none;
  margin: 10px 20px 19px 21px;
  font-size: 12px;
  line-height: 20.500px;
  color: #616161;
  word-break: break-all;
}
</style>
